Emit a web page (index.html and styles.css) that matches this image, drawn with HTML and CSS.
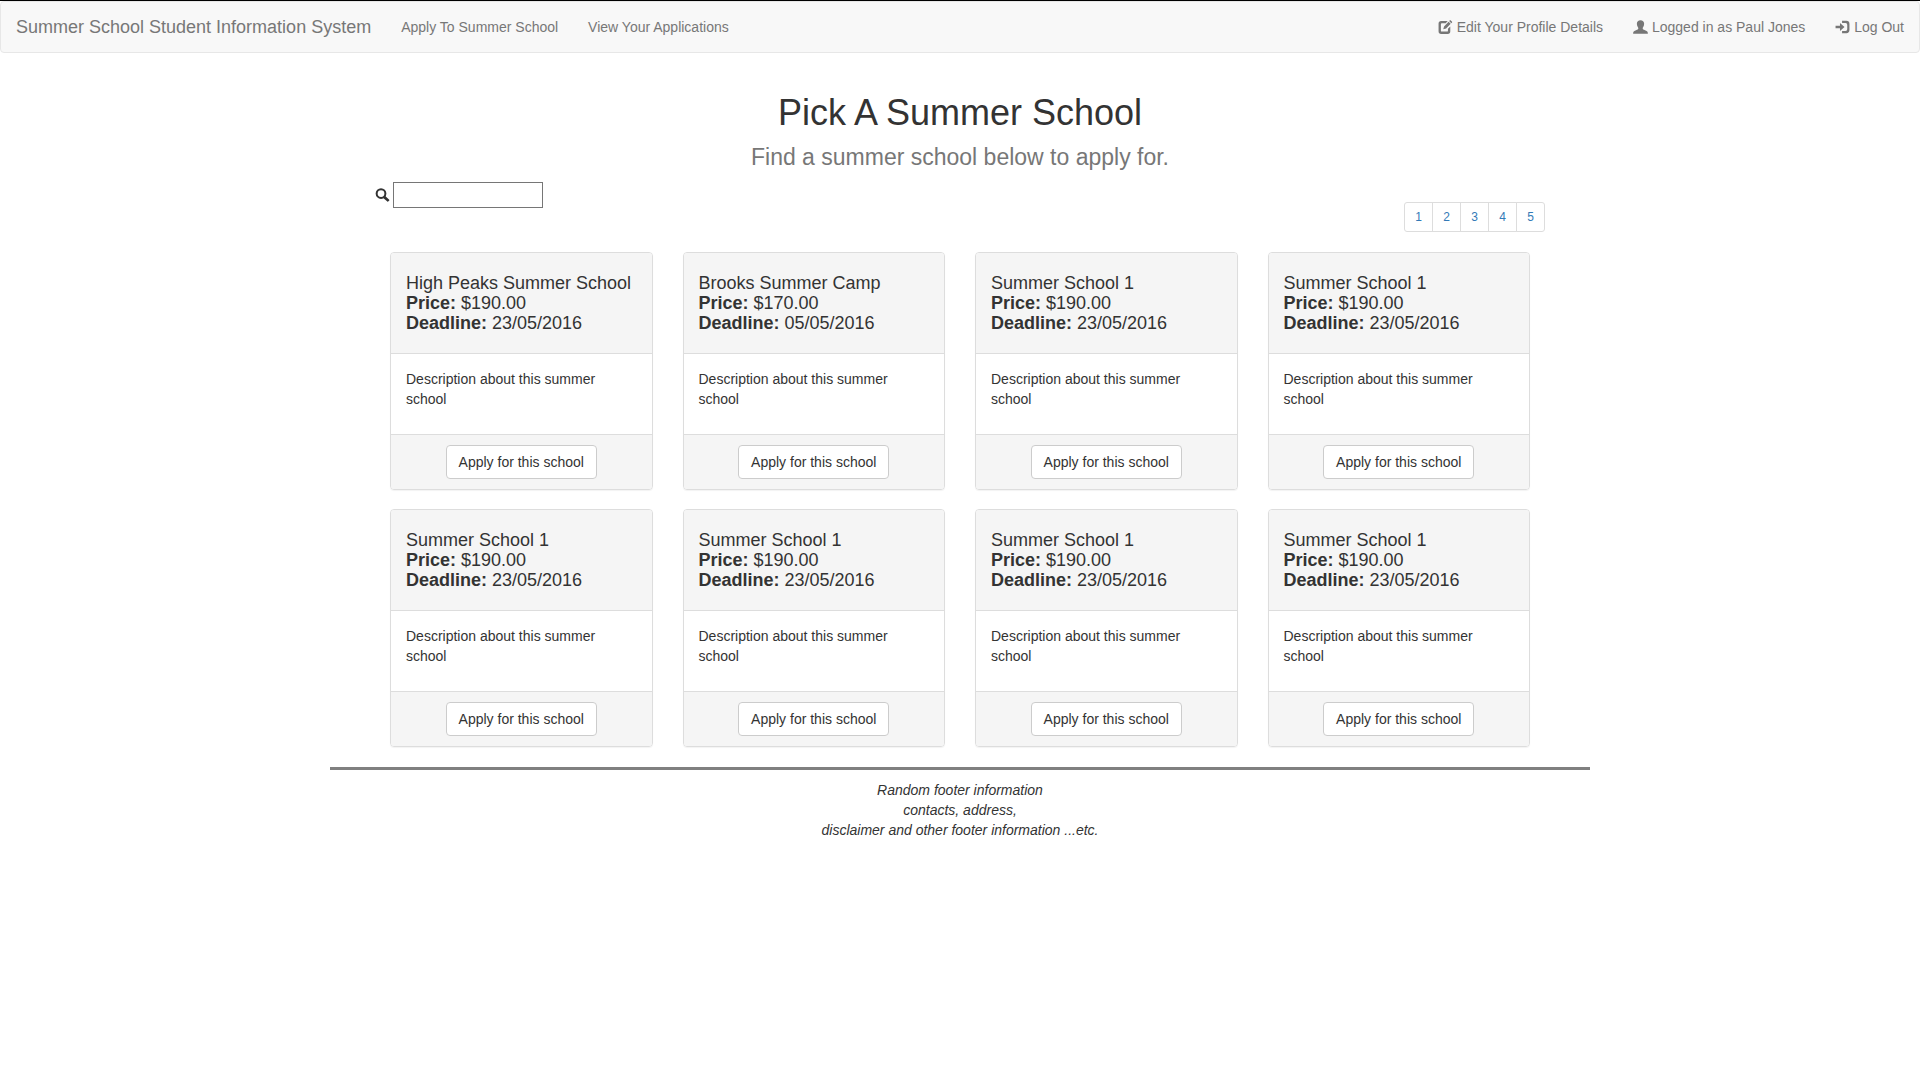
FILE: index.html
```html
<!DOCTYPE html>
<html lang="en">
<head>
<meta charset="utf-8">
<meta name="viewport" content="width=device-width, initial-scale=1">
<title>Summer School Student Information System</title>
<link rel="stylesheet" href="styles.css">
</head>
<body>
<nav class="navbar">
  <a class="brand" href="#">Summer School Student Information System</a>
  <ul class="nav">
    <li><a href="#">Apply To Summer School</a></li>
    <li><a href="#">View Your Applications</a></li>
  </ul>
  <ul class="nav nav-right">
    <li><a href="#"><svg class="icon" viewBox="95 30 1075 1075" aria-hidden="true"><path d="M300 100h500l-150 180H350q-70 0-70 70v500q0 70 70 70h400q70 0 70-70V700l180-170v370q0 200-200 200H300q-200 0-200-200V300q0-200 200-200z"/><path d="M460 740l60-220 350-360 160 160-350 360zM915 115l60-60q25-25 50 0l110 110q25 25 0 50l-60 60z"/></svg> Edit Your Profile Details</a></li>
    <li><a href="#"><svg class="icon" viewBox="20 10 1160 1080" aria-hidden="true"><path d="M600 20c-170 0-280 100-280 260 0 90 10 150 40 210 25 50 70 90 70 130 0 80-30 110-100 140L130 850C50 890 30 950 30 1080h1140c0-130-20-190-100-230L870 760c-70-30-100-60-100-140 0-40 45-80 70-130 30-60 40-120 40-210C880 120 770 20 600 20z"/></svg> Logged in as Paul Jones</a></li>
    <li><a href="#"><svg class="icon" viewBox="15 30 1140 1140" aria-hidden="true"><path d="M550 100h350q250 0 250 250v500q0 250-250 250H550V920h290q130 0 130-130V410q0-130-130-130H550z"/><path d="M380 280l370 320-370 320V710H20V490h360z"/></svg> Log Out</a></li>
  </ul>
</nav>
<main class="container">
  <header class="intro">
    <h1>Pick A Summer School</h1>
    <p>Find a summer school below to apply for.</p>
  </header>
  <div class="toolbar">
    <label class="search">
      <svg class="icon" viewBox="90 80 1040 1040" role="img" aria-label="Search"><path fill-rule="evenodd" d="M500 90a400 400 0 1 0 0 800 400 400 0 0 0 0-800zm0 150a250 250 0 1 1 0 500 250 250 0 0 1 0-500z"/><path d="M660 820l150-150 300 280q30 30 0 60l-80 80q-30 30-60 0z"/></svg>
      <input type="text">
    </label>
    <ul class="pagination">
      <li><a href="#">1</a></li>
      <li><a href="#">2</a></li>
      <li><a href="#">3</a></li>
      <li><a href="#">4</a></li>
      <li><a href="#">5</a></li>
    </ul>
  </div>
  <div class="schools">
    <article class="panel">
      <h4>High Peaks Summer School<br><b>Price:</b> $190.00<br><b>Deadline:</b> 23/05/2016</h4>
      <p>Description about this summer school</p>
      <footer><button class="btn" type="button">Apply for this school</button></footer>
    </article>
    <article class="panel">
      <h4>Brooks Summer Camp<br><b>Price:</b> $170.00<br><b>Deadline:</b> 05/05/2016</h4>
      <p>Description about this summer school</p>
      <footer><button class="btn" type="button">Apply for this school</button></footer>
    </article>
    <article class="panel">
      <h4>Summer School 1<br><b>Price:</b> $190.00<br><b>Deadline:</b> 23/05/2016</h4>
      <p>Description about this summer school</p>
      <footer><button class="btn" type="button">Apply for this school</button></footer>
    </article>
    <article class="panel">
      <h4>Summer School 1<br><b>Price:</b> $190.00<br><b>Deadline:</b> 23/05/2016</h4>
      <p>Description about this summer school</p>
      <footer><button class="btn" type="button">Apply for this school</button></footer>
    </article>
    <article class="panel">
      <h4>Summer School 1<br><b>Price:</b> $190.00<br><b>Deadline:</b> 23/05/2016</h4>
      <p>Description about this summer school</p>
      <footer><button class="btn" type="button">Apply for this school</button></footer>
    </article>
    <article class="panel">
      <h4>Summer School 1<br><b>Price:</b> $190.00<br><b>Deadline:</b> 23/05/2016</h4>
      <p>Description about this summer school</p>
      <footer><button class="btn" type="button">Apply for this school</button></footer>
    </article>
    <article class="panel">
      <h4>Summer School 1<br><b>Price:</b> $190.00<br><b>Deadline:</b> 23/05/2016</h4>
      <p>Description about this summer school</p>
      <footer><button class="btn" type="button">Apply for this school</button></footer>
    </article>
    <article class="panel">
      <h4>Summer School 1<br><b>Price:</b> $190.00<br><b>Deadline:</b> 23/05/2016</h4>
      <p>Description about this summer school</p>
      <footer><button class="btn" type="button">Apply for this school</button></footer>
    </article>
  </div>
</main>
<footer class="site-footer">Random footer information<br>contacts, address,<br>disclaimer and other footer information ...etc.</footer>
</body>
</html>
```
FILE: styles.css
```css
*, *::before, *::after { box-sizing: border-box; }

body {
  margin: 0;
  border-top: 1px solid #000;
  background: #fff;
  color: #333;
  font: 14px/20px "Liberation Sans", Arial, sans-serif;
}

ul { margin: 0; padding: 0; list-style: none; }
a { color: #337ab7; text-decoration: none; }

.icon {
  width: 15px;
  height: 14px;
  fill: currentColor;
  vertical-align: -2px;
}

/* Navigation bar */
.navbar {
  display: flex;
  flex-wrap: wrap;
  padding: 0 0 0 15px;
  border: 1px solid #e7e7e7;
  border-radius: 4px;
  background: #f8f8f8;
}
.navbar a { display: block; padding: 15px; color: #777; }
.navbar .brand { padding-left: 0; font-size: 18px; }
.nav { display: flex; flex-wrap: wrap; }
.nav-right { margin-left: auto; }

/* Page content */
.container { max-width: 1200px; margin: 0 auto; padding: 0 15px; }

.intro { padding-top: 40px; text-align: center; }
.intro h1 { margin: 0; font-size: 36px; font-weight: 400; line-height: 40px; }
.intro p { margin: 0; padding: 10px 0 11px; color: #777; font-size: 23px; line-height: 28px; }

.toolbar { display: flex; justify-content: space-between; align-items: flex-start; }
.search { display: flex; align-items: center; gap: 3px; }
.search input {
  width: 150px;
  height: 26px;
  padding: 1px 2px;
  border: 1px solid #767676;
  font: inherit;
}

.pagination { display: flex; margin: 20px 0; font-size: 12px; line-height: 18px; }
.pagination a {
  display: block;
  min-width: 29px;
  padding: 5px 10px;
  border: 1px solid #ddd;
  background: #fff;
  text-align: center;
}
.pagination li + li { margin-left: -1px; }
.pagination li:first-child a { border-radius: 3px 0 0 3px; }
.pagination li:last-child a { border-radius: 0 3px 3px 0; }

/* School cards */
.schools {
  display: grid;
  grid-template-columns: repeat(auto-fill, minmax(240px, 1fr));
  gap: 19px 30px;
  padding: 0 15px 20px;
}
.panel {
  overflow: hidden;
  border: 1px solid #ddd;
  border-radius: 4px;
  box-shadow: 0 1px 1px rgba(0, 0, 0, .05);
}
.panel h4 {
  margin: 0;
  padding: 20px 15px;
  border-bottom: 1px solid #ddd;
  background: #f5f5f5;
  font-size: 18px;
  font-weight: 400;
  line-height: 20px;
}
.panel p { margin: 0; padding: 15px 15px 25px; }
.panel footer {
  padding: 10px 15px;
  border-top: 1px solid #ddd;
  background: #f5f5f5;
  text-align: center;
}
.btn {
  display: block;
  margin: 0 auto;
  padding: 6px 12px;
  border: 1px solid #ccc;
  border-radius: 4px;
  background: #fff;
  color: #333;
  font: inherit;
}

.site-footer {
  max-width: 1260px;
  margin: 0 auto;
  padding: 10px 0;
  border-top: 3px solid #808080;
  font-style: italic;
  text-align: center;
}
```
